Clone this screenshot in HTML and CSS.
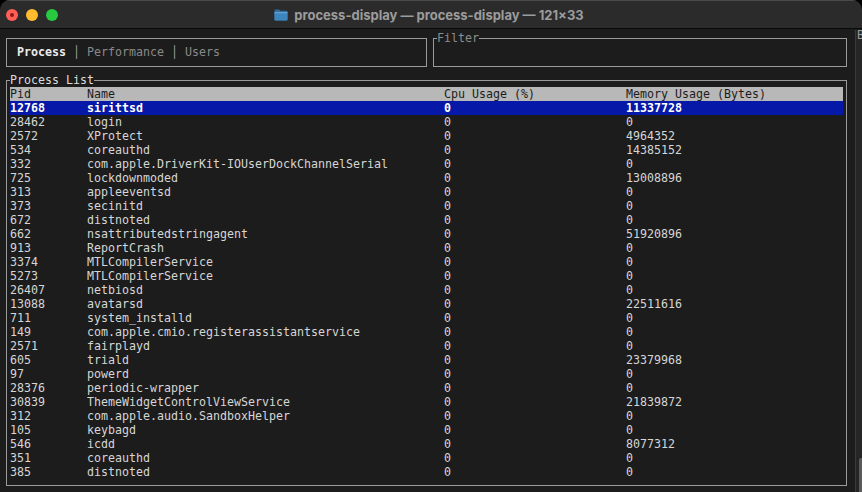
FILE: index.html
```html
<!DOCTYPE html>
<html lang="en">
<head>
<meta charset="utf-8">
<title>process-display</title>
<link rel="stylesheet" href="styles.css">
</head>
<body>
<div class="window">
  <header class="titlebar">
    <div class="lights">
      <span class="light red"><span class="dot"></span></span>
      <span class="light yellow"></span>
      <span class="light green"></span>
    </div>
    <div class="title">
      <svg class="folder" width="14" height="12" viewBox="0 0 14 12">
        <path d="M0.5 1.5 Q0.5 0.5 1.5 0.5 H5 L6.3 1.8 H12.5 Q13.5 1.8 13.5 2.8 V10.5 Q13.5 11.5 12.5 11.5 H1.5 Q0.5 11.5 0.5 10.5 Z" fill="#2f6e9f"/>
        <path d="M0.5 3.2 H13.5 V10.5 Q13.5 11.5 12.5 11.5 H1.5 Q0.5 11.5 0.5 10.5 Z" fill="#3d86bd"/>
        <rect x="0.5" y="3.2" width="13" height="1" fill="#6aaad8"/>
      </svg>
      <span>process-display — process-display — 121×33</span>
    </div>
    <div></div>
  </header>
  <div class="screen">
    <main class="terminal">
      <div class="top">
        <div class="tabs"><span class="tab active">Process</span><span class="sep"> │ </span><span class="tab">Performance</span><span class="sep"> │ </span><span class="tab">Users</span></div>
        <fieldset class="filter">
          <legend>Filter</legend>
          <div class="line"></div>
        </fieldset>
      </div>
      <fieldset class="plist">
        <legend>Process List</legend>
        <div class="row head"><span>Pid</span><span>Name</span><span>Cpu Usage (%)</span><span>Memory Usage (Bytes)</span></div>
        <div class="row sel"><span>12768</span><span>sirittsd</span><span>0</span><span>11337728</span></div>
        <div class="row"><span>28462</span><span>login</span><span>0</span><span>0</span></div>
        <div class="row"><span>2572</span><span>XProtect</span><span>0</span><span>4964352</span></div>
        <div class="row"><span>534</span><span>coreauthd</span><span>0</span><span>14385152</span></div>
        <div class="row"><span>332</span><span>com.apple.DriverKit-IOUserDockChannelSerial</span><span>0</span><span>0</span></div>
        <div class="row"><span>725</span><span>lockdownmoded</span><span>0</span><span>13008896</span></div>
        <div class="row"><span>313</span><span>appleeventsd</span><span>0</span><span>0</span></div>
        <div class="row"><span>373</span><span>secinitd</span><span>0</span><span>0</span></div>
        <div class="row"><span>672</span><span>distnoted</span><span>0</span><span>0</span></div>
        <div class="row"><span>662</span><span>nsattributedstringagent</span><span>0</span><span>51920896</span></div>
        <div class="row"><span>913</span><span>ReportCrash</span><span>0</span><span>0</span></div>
        <div class="row"><span>3374</span><span>MTLCompilerService</span><span>0</span><span>0</span></div>
        <div class="row"><span>5273</span><span>MTLCompilerService</span><span>0</span><span>0</span></div>
        <div class="row"><span>26407</span><span>netbiosd</span><span>0</span><span>0</span></div>
        <div class="row"><span>13088</span><span>avatarsd</span><span>0</span><span>22511616</span></div>
        <div class="row"><span>711</span><span>system_installd</span><span>0</span><span>0</span></div>
        <div class="row"><span>149</span><span>com.apple.cmio.registerassistantservice</span><span>0</span><span>0</span></div>
        <div class="row"><span>2571</span><span>fairplayd</span><span>0</span><span>0</span></div>
        <div class="row"><span>605</span><span>triald</span><span>0</span><span>23379968</span></div>
        <div class="row"><span>97</span><span>powerd</span><span>0</span><span>0</span></div>
        <div class="row"><span>28376</span><span>periodic-wrapper</span><span>0</span><span>0</span></div>
        <div class="row"><span>30839</span><span>ThemeWidgetControlViewService</span><span>0</span><span>21839872</span></div>
        <div class="row"><span>312</span><span>com.apple.audio.SandboxHelper</span><span>0</span><span>0</span></div>
        <div class="row"><span>105</span><span>keybagd</span><span>0</span><span>0</span></div>
        <div class="row"><span>546</span><span>icdd</span><span>0</span><span>8077312</span></div>
        <div class="row"><span>351</span><span>coreauthd</span><span>0</span><span>0</span></div>
        <div class="row"><span>385</span><span>distnoted</span><span>0</span><span>0</span></div>
      </fieldset>
    </main>
    <aside class="side">
      <span class="side-label">B</span>
      <span class="thumb"></span>
    </aside>
  </div>
</div>
</body>
</html>
```

FILE: styles.css
```css
html, body {
  margin: 0;
  padding: 0;
  background: #000;
}

.window {
  width: 862px;
  height: 492px;
  display: flex;
  flex-direction: column;
  background: #1c1c1c;
  border-radius: 10px 10px 0 0;
  overflow: hidden;
}

.titlebar {
  flex: none;
  display: grid;
  grid-template-columns: 1fr auto 1fr;
  align-items: center;
  background: #2b2b2b;
  border-top: 1px solid #4a4a4a;
  border-bottom: 1px solid #0a0a0a;
  box-sizing: border-box;
  height: 29px;
}

.lights {
  display: flex;
  gap: 8px;
  padding-left: 6px;
}

.light {
  width: 12px;
  height: 12px;
  border-radius: 50%;
  display: flex;
  align-items: center;
  justify-content: center;
}

.red { background: #ff5f57; }
.yellow { background: #febc2e; }
.green { background: #28c840; }

.dot {
  width: 4px;
  height: 4px;
  border-radius: 50%;
  background: #8c1a14;
}

.title {
  display: flex;
  align-items: center;
  gap: 6px;
  font-family: Inter, "Open Sans", sans-serif;
  font-weight: 700;
  font-size: 13px;
  color: #9c9c9c;
  margin-right: 4px;
}

.folder { display: block; }

.screen {
  flex: 1;
  display: flex;
  padding-top: 2px;
  min-height: 0;
}

.terminal {
  width: 847px;
  flex: none;
  margin: 0 5px 0 3px;
  font-family: "DejaVu Sans Mono", "Liberation Mono", monospace;
  font-size: 11.63px;
  line-height: 14px;
  color: #d6d6d6;
}

.top {
  display: flex;
  height: 42px;
}

.tabs {
  width: 421px;
  flex: none;
  margin: 7px 3px 6px 3px;
  border: 1px solid #9a9a9a;
  padding: 6px 0 6px 10px;
  box-sizing: border-box;
  height: 29px;
  white-space: pre;
}

.tab { color: #8a8a8a; }
.tab.active { color: #ececec; font-weight: 700; }
.sep { color: #a0a0a0; }

fieldset {
  margin: 0 3px;
  padding: 0 3px 6px 3px;
  border: 1px solid #9a9a9a;
  min-width: 0;
}

legend {
  padding: 0;
  line-height: 14px;
  white-space: pre;
}

.filter {
  width: 414px;
  flex: none;
  box-sizing: border-box;
  height: 36px;
}

.filter legend { color: #8c8c8c; }

.filter .line { height: 14px; }

.plist {
  box-sizing: border-box;
}

.plist legend { color: #dcdcdc; }

.row {
  display: grid;
  grid-template-columns: 77px 357px 182px 1fr;
  height: 14px;
  white-space: pre;
}

.row span { overflow: hidden; }

.row.head {
  background: #b8b8b8;
  color: #1c1c1c;
}

.row.sel {
  background: #0618a8;
  color: #ffffff;
  font-weight: 700;
}

.side {
  flex: 1;
  display: flex;
  flex-direction: column;
  justify-content: space-between;
  align-items: flex-end;
  background: #262626;
  border-left: 1px solid #3a3a3a;
  margin-top: -1px;
  font-family: "DejaVu Sans Mono", monospace;
  font-size: 11.63px;
  line-height: 11px;
  color: #9a9a9a;
  overflow: hidden;
}

.side-label {
  align-self: flex-start;
  padding-left: 1px;
}

.thumb {
  width: 3px;
  height: 34px;
  background: #5a5a5a;
  border-radius: 2px 0 0 0;
}
```
